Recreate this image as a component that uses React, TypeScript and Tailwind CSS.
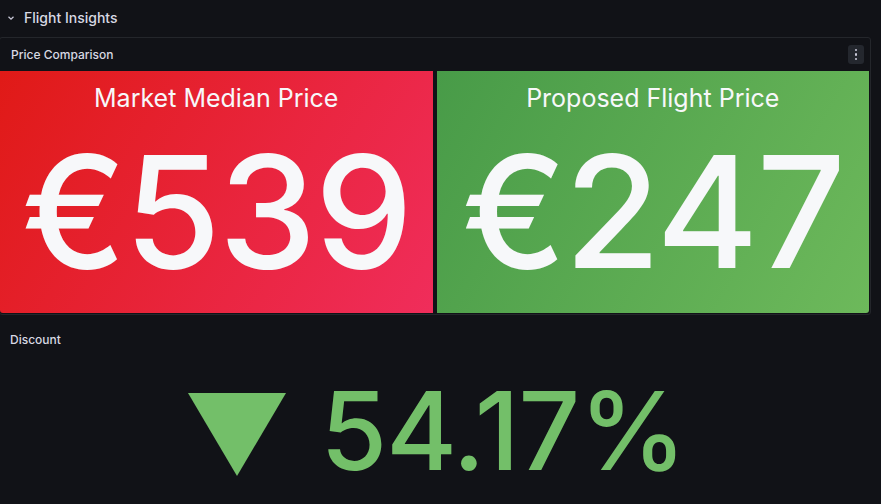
import React from "react";

function StatBox({ title, value, gradient }: { title: string; value: string; gradient: string }) {
  return (
    <div className={`flex-1 flex flex-col items-center ${gradient} text-[#f7f8fa]`}>
      <div className="mt-[11px] text-[25px] leading-[32px]">{title}</div>
      <div className="mt-[8px] text-[156px] leading-[180px] font-medium tracking-[-2px]">{value}</div>
    </div>
  );
}

export default function App() {
  return (
    <div
      className="w-[881px] h-[504px] overflow-hidden bg-[#111217] text-[#ccccdc]"
      style={{ fontFamily: "Inter, 'Noto Sans', sans-serif" }}
    >
      <div className="h-[37px] flex items-center pl-[7px] pb-[3px]">
        <svg width="8" height="8" viewBox="0 0 8 8" className="mt-[1px]">
          <path d="M1.5 2.75 L4 5.25 L6.5 2.75" stroke="#ccccdc" strokeWidth="1.2" fill="none" />
        </svg>
        <span className="ml-[9px] text-[14px] font-medium text-[#d8d9e3]">Flight Insights</span>
      </div>
      <div className="ml-[-1px] w-[872px] h-[278px] border border-[#24262b] rounded-[3px] flex flex-col">
        <div className="h-[33px] flex items-center justify-between pl-[11px] pr-[6px]">
          <span className="text-[12px] font-medium text-[#d8d9e3]">Price Comparison</span>
          <div className="w-[16px] h-[19px] rounded-[3px] bg-[#24272e] flex flex-col items-center justify-center gap-[2px]">
            <span className="w-[2.5px] h-[2.5px] rounded-full bg-[#ccccdc]" />
            <span className="w-[2.5px] h-[2.5px] rounded-full bg-[#ccccdc]" />
            <span className="w-[2.5px] h-[2.5px] rounded-full bg-[#ccccdc]" />
          </div>
        </div>
        <div className="flex gap-[4px] h-[242px] pr-[1px] overflow-hidden">
          <StatBox
            title="Market Median Price"
            value="€539"
            gradient="bg-[linear-gradient(120deg,#e01a17,#f02d5b)] rounded-bl-[3px]"
          />
          <StatBox
            title="Proposed Flight Price"
            value="€247"
            gradient="bg-[linear-gradient(120deg,#489b48,#6db95b)] rounded-br-[3px]"
          />
        </div>
      </div>
      <div className="h-[189px] flex flex-col">
        <div className="h-[48px] flex items-center pl-[10px] pt-[1px]">
          <span className="text-[12px] font-medium text-[#d8d9e3]">Discount</span>
        </div>
        <div className="flex items-center justify-center gap-[34px] mt-[24px] pr-[10px]">
          <svg width="98" height="83" viewBox="0 0 98 83" className="ml-[3px]">
            <polygon points="0,0 98,0 49,83" fill="#73bf69" />
          </svg>
          <span className="text-[108px] leading-[100px] font-medium tracking-[-1px] text-[#73bf69] mt-[-6px]">54.17%</span>
        </div>
      </div>
    </div>
  );
}
